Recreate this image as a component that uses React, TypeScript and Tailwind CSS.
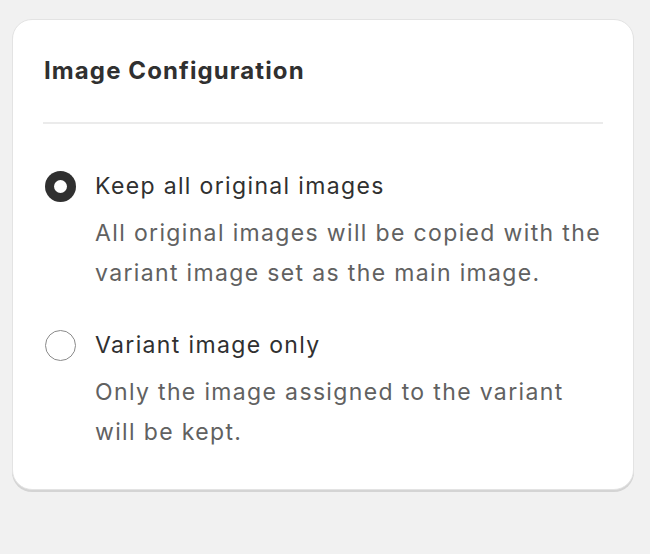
import React, { useState } from "react";

interface OptionProps {
  label: string;
  description: string[];
  selected: boolean;
  onSelect: () => void;
}

const RadioOption: React.FC<OptionProps> = ({ label, description, selected, onSelect }) => {
  return (
    <label className="flex gap-[19px] cursor-pointer" onClick={onSelect}>
      <div className="h-[40px] flex items-center">
        {selected ? (
          <span className="w-[31px] h-[31px] rounded-full bg-[#303030] flex items-center justify-center">
            <span className="w-[13px] h-[13px] rounded-full bg-white" />
          </span>
        ) : (
          <span className="w-[31px] h-[31px] rounded-full border-[1.5px] border-[#8a8a8a] bg-white" />
        )}
      </div>
      <div className="flex flex-col tracking-[1.35px]">
        <span className="text-[23px] leading-[40px] text-[#303030]">{label}</span>
        <div className="mt-[7px] text-[23px] leading-[40px] text-[#616161]">
          {description.map((line) => (
            <div key={line} className="whitespace-nowrap">{line}</div>
          ))}
        </div>
      </div>
    </label>
  );
};

export default function App() {
  const [choice, setChoice] = useState<"all" | "variant">("all");

  return (
    <div className="w-[650px] h-[554px] bg-[#f1f1f1] pt-[19px] px-[12px] font-['Inter',sans-serif] antialiased">
      <div className="w-[622px] bg-white rounded-[20px] border border-[#e3e3e3] shadow-[0_2px_0_0_#d4d4d4] px-[30px] pt-[35px] pb-[37px]">
        <h2 className="text-[24px] leading-[32px] font-bold tracking-[1.1px] text-[#303030] pl-[1px]">
          Image Configuration
        </h2>
        <div className="mt-[35px] h-[2px] bg-[#ebebeb]" />
        <div className="mt-[42px] pl-[2px] flex flex-col gap-[32px]">
          <RadioOption
            label="Keep all original images"
            description={[
              "All original images will be copied with the",
              "variant image set as the main image.",
            ]}
            selected={choice === "all"}
            onSelect={() => setChoice("all")}
          />
          <RadioOption
            label="Variant image only"
            description={["Only the image assigned to the variant", "will be kept."]}
            selected={choice === "variant"}
            onSelect={() => setChoice("variant")}
          />
        </div>
      </div>
    </div>
  );
}
